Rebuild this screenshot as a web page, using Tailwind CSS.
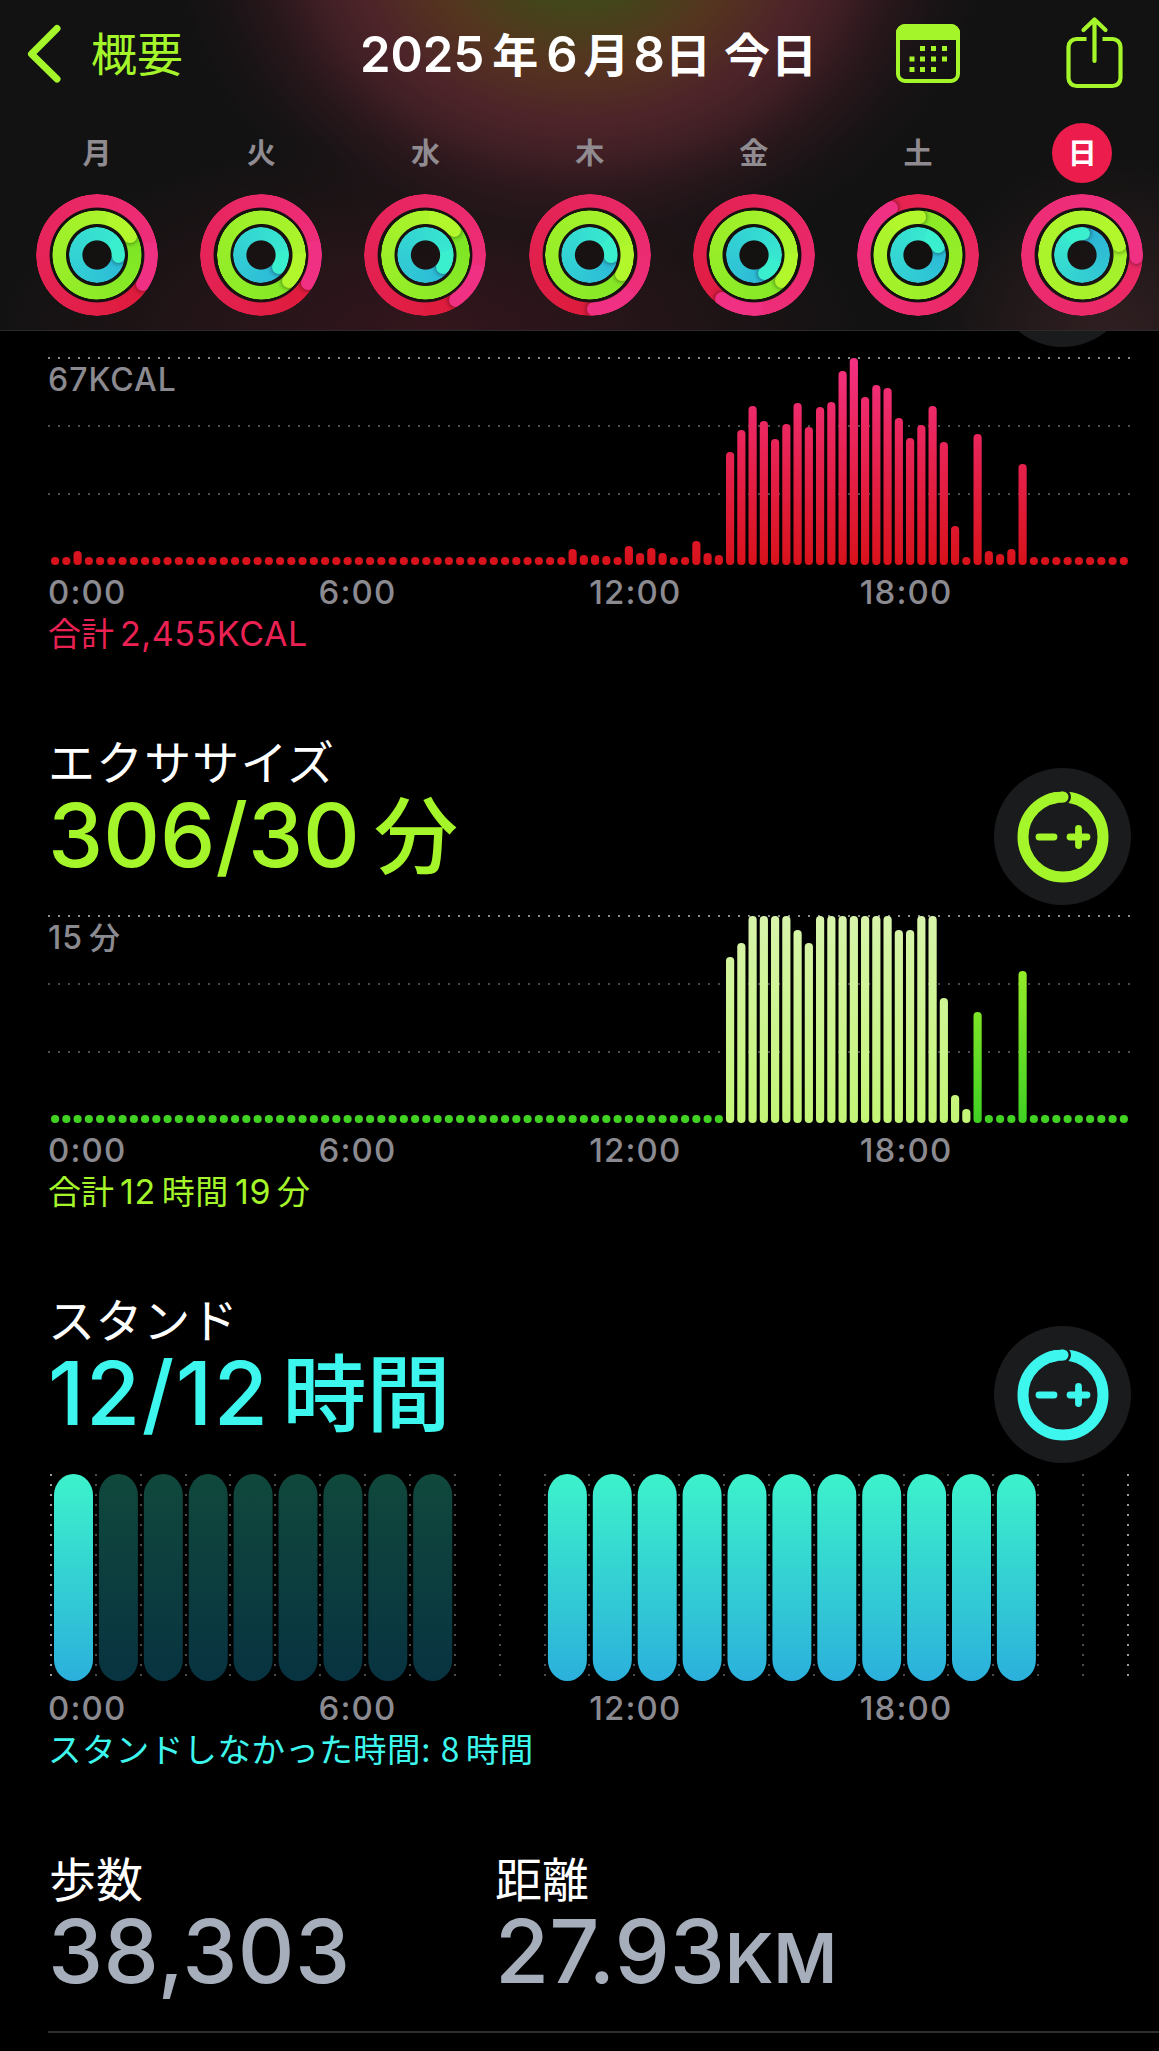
<!DOCTYPE html>
<html lang="ja">
<head>
<meta charset="utf-8">
<title>アクティビティ</title>
<script src="https://cdn.jsdelivr.net/npm/@tailwindcss/browser@4"></script>
</head>
<body class="bg-black">
<div class="relative w-[1159px] h-[2051px] overflow-hidden bg-black font-['Inter','Noto_Sans_CJK_JP',sans-serif] text-white">

  <header class="relative z-10 h-[331px] overflow-hidden border-b border-[#2b2b2c] bg-[#121212] bg-[radial-gradient(ellipse_410px_330px_at_580px_-60px,#3c4c19_0%,#41481a_18%,#55341f_38%,#4d2429_55%,#432026f0_65%,#30191fc0_77%,#2015187a_89%,#12121200_100%),radial-gradient(ellipse_440px_200px_at_430px_335px,#34161d_0%,#2b151ac0_45%,#12121200_100%),radial-gradient(ellipse_190px_190px_at_1110px_345px,#332023_0%,#12121200_100%)]">
    <div class="flex h-[112px] items-start">
      <svg class="ml-[25px] mt-[24px] shrink-0" width="38" height="60" viewBox="0 0 38 60" fill="none" stroke="#a4f52a" stroke-width="7" stroke-linecap="round" stroke-linejoin="round"><path d="M32 4.500 L6.500 30 L32 55"/></svg>
      <span class="ml-[28px] w-[97px] whitespace-nowrap text-[46px] leading-[109px] text-[#a4f52a]">概要</span>
      <h1 class="ml-[172px] w-[480px] whitespace-nowrap text-[49px] font-semibold leading-[110px]">2025<span class="ml-[8px] text-[46px]">年</span><span class="ml-[8px]">6</span><span class="ml-[6px] text-[46px]">月</span><span class="ml-[4px]">8</span><span class="text-[46px]">日</span><span class="ml-[13px] text-[46px] tracking-[1px]">今日</span></h1>
      <svg class="ml-[56px] mt-[24px] shrink-0" width="65" height="60" viewBox="0 0 65 60"><rect x="2" y="2" width="60" height="55" rx="7" fill="none" stroke="#a4f52a" stroke-width="4"/><path d="M0 16V9a9 9 0 0 1 9-9h46a9 9 0 0 1 9 9v7z" fill="#a4f52a"/><g fill="#a4f52a"><path d="M24 22h5v5h-5zM35 22h5v5h-5zM46 22h5v5h-5zM13.500 32.500h5v5h-5zM24 32.500h5v5h-5zM35 32.500h5v5h-5zM46 32.500h5v5h-5zM13.500 43h5v5h-5zM24 43h5v5h-5zM35 43h5v5h-5z"/></g></svg>
      <svg class="ml-[105px] mt-[15px] shrink-0" width="58" height="74" viewBox="0 0 58 74" fill="none" stroke="#a4f52a" stroke-width="4.200" stroke-linecap="round" stroke-linejoin="round"><path d="M20.500 24H10.500a8 8 0 0 0-8 8v31a8 8 0 0 0 8 8h36a8 8 0 0 0 8-8V32a8 8 0 0 0-8-8H36.500" stroke-linecap="butt"/><path d="M28.500 46V4.500M17.500 15L28.500 4.500l11 10.500"/></svg>
    </div>
    <div id="week" class="ml-[15px] grid w-[1150px] grid-cols-[repeat(7,164.200px)]"></div>
  </header>

  <main class="relative -mt-px">
    <div class="absolute left-[994px] top-[-120px] size-[137px] rounded-full bg-[#1a1b1d]"></div>

    <section class="h-[390px] pl-[48px] pt-[28px]">
      <div class="relative h-[207px]" data-chart="move">
        <p class="absolute left-0 top-[6px] text-[32px] font-medium leading-[32px] tracking-[1px] text-[#8b8a90]">67KCAL</p>
      </div>
      <div class="axis"></div>
      <p class="h-[40px] whitespace-nowrap pt-[3px] text-[34px] leading-[24px] tracking-[.6px] text-[#ea2153]"><span class="text-[33px] tracking-normal">合計</span><span class="ml-[6px]">2,455KCAL</span></p>
    </section>

    <section class="h-[558px] pl-[48px]">
      <div class="relative h-[196px] pt-[14px]">
        <h2 class="h-[57px] text-[47px] leading-[57px] tracking-[1.100px]">エクササイズ</h2>
        <p class="whitespace-nowrap text-[88px] font-medium leading-[88px] text-[#a4f52a]">306/30<span class="ml-[14px] text-[84px] font-medium">分</span></p>
        <div class="absolute left-[946px] top-[48px] flex size-[137px] items-center justify-center rounded-full bg-[#1a1b1d] text-[#a4f52a]" data-goal></div>
      </div>
      <div class="relative h-[207px]" data-chart="exercise">
        <p class="absolute left-0 top-[6px] whitespace-nowrap text-[32px] font-medium leading-[32px] tracking-[1px] text-[#8b8a90]">15<span class="ml-[6px] text-[31px]">分</span></p>
      </div>
      <div class="axis"></div>
      <p class="h-[40px] whitespace-nowrap pt-[3px] text-[34px] leading-[24px] tracking-[.6px] text-[#a4f52a]"><span class="text-[33px] tracking-normal">合計</span><span class="ml-[6px]">12</span><span class="ml-[6px] text-[33px]">時間</span><span class="ml-[6px]">19</span><span class="ml-[6px] text-[33px]">分</span></p>
    </section>

    <section class="h-[558px] pl-[48px]">
      <div class="relative h-[196px] pt-[14px]">
        <h2 class="h-[57px] text-[47px] leading-[57px] tracking-[.600px]">スタンド</h2>
        <p class="whitespace-nowrap text-[88px] font-medium leading-[88px] text-[#3df6ee]"><span class="tracking-[1.500px]">12/12</span><span class="ml-[13px] text-[84px] font-medium">時間</span></p>
        <div class="absolute left-[946px] top-[48px] flex size-[137px] items-center justify-center rounded-full bg-[#1a1b1d] text-[#3df6ee]" data-goal></div>
      </div>
      <div class="relative h-[207px]" data-chart="stand"></div>
      <div class="axis"></div>
      <p class="h-[40px] whitespace-nowrap pt-px text-[33.500px] leading-[24px] tracking-[.4px] text-[#3df6ee]">スタンドしなかった時間: <span class="font-['Noto_Sans_CJK_JP']">8</span><span class="ml-[6px]">時間</span></p>
    </section>

    <section class="ml-[48px] flex h-[197px] border-b-2 border-[#2f2f31] pt-[15px]">
      <div class="w-[447px]">
        <h2 class="h-[56px] pl-px text-[47px] leading-[57px]">歩数</h2>
        <p class="text-[88px] font-medium leading-[88px] tracking-[.4px] text-[#a7aebb]">38,303</p>
      </div>
      <div>
        <h2 class="h-[56px] text-[47px] leading-[57px]">距離</h2>
        <p class="text-[88px] font-medium leading-[88px] text-[#a7aebb]">27.93<span class="text-[69px] font-semibold">KM</span></p>
      </div>
    </section>
  </main>
</div>

<script>
// Each day: label, then [tip angle, trailing colour] for move, exercise and stand
const week = [
  ['月', [122, '#de1b3a'], [61, '#7be524'], [94, '#2cb8d8']],
  ['火', [121, '#de1b3a'], [133, '#84e826'], [125, '#2cb8d8']],
  ['水', [146, '#de1b3a'], [50, '#7be524'], [124, '#2cb8d8']],
  ['木', [176, '#dc1b3a'], [121, '#84e826'], [94, '#2cb8d8']],
  ['金', [216, '#df1c40'], [133, '#84e826'], [150, '#2cb8d8']],
  ['土', [330, '#e6234f'], [2, '#8aea26'], [67, '#2cb8d8']],
  ['日', [92, '#e92862'], [75, '#a3f02b'], [2, '#2cb0d6']],
];
const tips = ['#f03083', '#b2f62c', '#3aefce'];
const radii = [61, 44.6, 28.2], W = 13.6;
document.getElementById('week').innerHTML = week.map(([d, ...rings]) => {
  const on = d === '日';
  const html = rings.map(([a, c], i) => {
    const R = radii[i], r = R - W / 2, t = a * Math.PI / 180;
    const x = R + r * Math.sin(t) - W / 2, y = R - r * Math.cos(t) - W / 2;
    const m = `radial-gradient(circle at center,transparent ${R - W - .5}px,#000 ${R - W + .5}px,#000 ${R - .5}px,transparent ${R + .3}px)`;
    return `<div class="absolute rounded-full" style="inset:${61 - R}px;background:conic-gradient(from ${a}deg,${c},${tips[i]});-webkit-mask:${m};mask:${m}">
      <div class="absolute rounded-full shadow-[0_0_4px_1px_rgba(0,0,0,.4)]" style="left:${x}px;top:${y}px;width:${W}px;height:${W}px;background:${tips[i]}"></div>
      <div class="absolute inset-0 rounded-full" style="background:conic-gradient(from ${a - 45}deg,${tips[i]} 45deg,transparent 45deg)"></div></div>`;
  }).join('');
  return `<div class="flex flex-col items-center">
    <div class="mt-[11px] flex size-[60px] items-center justify-center rounded-full text-[29px] leading-[29px] ${on ? 'bg-[#ec1c4c] font-bold text-white' : 'font-bold text-[#8f8b90]'}"><span>${d}</span></div>
    <div class="relative mt-[11px] size-[122px]"><div class="absolute inset-[12px] rounded-full bg-[#12100f]/60"></div>${html}</div></div>`;
}).join('');

document.querySelectorAll('[data-goal]').forEach(e => e.innerHTML =
  `<svg width="92" height="92" viewBox="-46 -46 92 92" fill="none" stroke="currentColor"><circle r="40" stroke-width="11"/><circle cx="0" cy="-40" r="8" fill="#1a1b1d" stroke="none"/><path d="M-13.700 -37.600A40 40 0 0 1 0 -40" stroke-width="11"/><circle cx="0" cy="-40" r="5.500" fill="currentColor" stroke="none"/><path d="M-24 0H-9M7 0H24M15.500 -8.500V8.500" stroke-width="6.800" stroke-linecap="round"/></svg>`);

document.querySelectorAll('.axis').forEach(e => {
  e.innerHTML = `<div class="grid h-[54px] grid-cols-[repeat(4,270.600px)] text-[33px] font-medium leading-[54px] tracking-[1.100px] text-[#8b8a90]">` +
    ['0:00', '6:00', '12:00', '18:00'].map(t => `<span>${t}</span>`).join('') + '</div>';
});

const move = Array(96).fill(8), ex = Array(96).fill(8);
Object.assign(move, { 2: 14, 46: 16, 47: 10, 48: 10, 49: 9, 51: 19, 52: 12, 53: 17, 54: 12, 57: 24, 58: 12, 59: 10 });
[113,135,159,144,126,141,162,138,158,163,194,207,168,180,177,147,127,140,159,123,39,8,131,14,11,16,101].forEach((h, i) => move[60 + i] = h);
[166,180,207,207,207,207,193,180,207,207,207,207,207,207,207,193,193,207,207,125,28,14,111,8,8,8,152].forEach((h, i) => ex[60 + i] = h);

const grad = (id, a, b) => `<linearGradient id="${id}" gradientUnits="userSpaceOnUse" x1="0" y1="0" x2="0" y2="207"><stop stop-color="${a}"/><stop offset="1" stop-color="${b}"/></linearGradient>`;
const svg = s => `<svg class="block overflow-visible" width="1100" height="207" viewBox="0 0 1100 207">${s}</svg>`;
const rows = [0, 68, 136].map((y, i) => `<path d="M0 ${y}H1083" stroke="${i ? '#4c4c4c' : '#8a8a8a'}" stroke-width="2" stroke-dasharray="2 8"/>`).join('');
const bars = (v, fill) => v.map((h, i) => `<rect x="${(3 + i * 11.25).toFixed(2)}" y="${207 - h}" width="8.200" height="${h}" rx="4" fill="${fill(i)}"/>`).join('');
const put = (n, s) => document.querySelector(`[data-chart=${n}]`).insertAdjacentHTML('beforeend', svg(s));
put('move', grad('gm', '#f43183', '#d8121a') + rows + bars(move, () => 'url(#gm)'));
put('exercise', grad('gl', '#d8f4ab', '#c3f576') + grad('ge', '#b2f62c', '#3fd123') + rows + bars(ex, i => i > 59 && i < 82 ? 'url(#gl)' : 'url(#ge)'));
let s = grad('gs', '#3df2cb', '#2bb0dc') + grad('gd', '#10483c', '#083341');
for (let i = 0; i < 25; i++) s += `<path d="M${Math.round(3 + i * 44.87)} 0V203" stroke="${i % 24 ? '#4c4c4c' : '#9a9a9a'}" stroke-width="2" stroke-dasharray="2 8"/>`;
for (let i = 0; i < 22; i++) if (i < 9 || i > 10) s += `<rect x="${(6 + i * 44.9).toFixed(1)}" y="0" width="39" height="207" rx="19.500" ry="21" fill="url(#${i && i < 9 ? 'gd' : 'gs'})"/>`;
put('stand', s);
</script>
</body>
</html>
